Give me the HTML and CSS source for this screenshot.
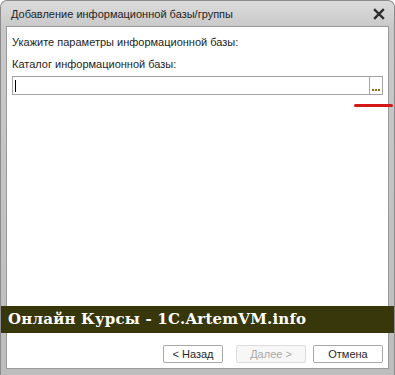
FILE: index.html
```html
<!DOCTYPE html>
<html lang="ru">
<head>
    <meta charset="UTF-8">
    <title>Добавление информационной базы/группы</title>
    <link rel="stylesheet" href="styles.css">
</head>
<body>

<div class="window">
    <div class="titlebar">
        <span class="title">Добавление информационной базы/группы</span>
        <svg class="close" width="12" height="12" viewBox="0 0 12 12">
            <path d="M2 2 L10 10 M10 2 L2 10" stroke="#2b2b2b" stroke-width="2.4" stroke-linecap="square"/>
        </svg>
    </div>

    <div class="panel">
        <div class="form">
            <p class="hint">Укажите параметры информационной базы:</p>
            <label class="label" for="catalog">Каталог информационной базы:</label>
            <div class="field">
                <div class="input" id="catalog"><span class="caret"></span></div>
                <div class="choose"><span></span><span></span><span></span></div>
            </div>
        </div>

        <div class="buttons">
            <button class="btn back">&lt; Назад</button>
            <button class="btn disabled">Далее &gt;</button>
            <button class="btn cancel">Отмена</button>
        </div>
    </div>

    <div class="mark"></div>
    <div class="banner">Онлайн Курсы - 1С.ArtemVM.info</div>
</div>

</body>
</html>
```

FILE: styles.css
```css
body {
    margin: 0;
    padding: 0;
    background-color: #ffffff;
    font-family: "Liberation Sans", Arial, sans-serif;
}
.window {
    position: relative;
    width: 395px;
    height: 375px;
    box-sizing: border-box;
    display: flex;
    flex-direction: column;
    border-radius: 7px 7px 0 0;
    border: 1px solid #8c8c8c;
    border-bottom: none;
    background: linear-gradient(to bottom, #dcdcdc 0, #c9c9c9 26px, #bdbdbd 100%);
    overflow: hidden;
}
.titlebar {
    height: 25px;
    display: flex;
    align-items: center;
    justify-content: space-between;
    padding: 0 9px 0 10px;
}
.title {
    font-size: 11px;
    color: #1e1e1e;
    padding-top: 1px;
}
.close {
    display: block;
}
.panel {
    flex: 1;
    margin: 0 5px 6px 5px;
    background-color: #ffffff;
    border: 1px solid #9a9a9a;
    display: flex;
    flex-direction: column;
    justify-content: space-between;
}
.form {
    padding: 8px 5px 0 5px;
}
.hint {
    margin: 0;
    font-size: 11px;
    color: #1e1e1e;
    line-height: 14px;
}
.label {
    display: block;
    margin-top: 8px;
    font-size: 11px;
    color: #1e1e1e;
    line-height: 14px;
}
.field {
    display: flex;
    margin-top: 5px;
    height: 17px;
    border: 1px solid #a3a3a3;
}
.input {
    flex: 1;
    display: flex;
    align-items: center;
    padding-left: 2px;
}
.caret {
    width: 1px;
    height: 12px;
    background-color: #000;
}
.choose {
    width: 13px;
    border-left: 1px solid #a3a3a3;
    display: flex;
    align-items: flex-end;
    justify-content: center;
    gap: 1px;
    padding-bottom: 3px;
    box-sizing: border-box;
}
.choose span {
    width: 2px;
    height: 2px;
    background-color: #8a6a10;
}
.buttons {
    display: flex;
    justify-content: flex-end;
    gap: 7px;
    padding: 0 5px 5px 0;
}
.btn {
    height: 18px;
    width: 70px;
    padding: 0;
    background-color: #ffffff;
    border: 1px solid #a9a9a9;
    border-radius: 2px;
    font-family: "Liberation Sans", Arial, sans-serif;
    font-size: 11px;
    color: #2a2a2a;
}
.btn.back {
    width: 60px;
}
.btn.disabled {
    color: #a8a8a8;
    border-color: #dcdcdc;
    background-color: #f7f7f7;
    margin-left: 6px;
}
/* пометки поверх окна */
.mark {
    position: absolute;
    left: 353px;
    top: 103px;
    width: 39px;
    height: 3px;
    border-radius: 2px;
    background-color: #d41818;
}
.banner {
    position: absolute;
    left: -1px;
    right: -1px;
    top: 305px;
    height: 27px;
    padding-left: 8px;
    background-color: #37370b;
    color: #ffffff;
    font-family: "DejaVu Serif", "Liberation Serif", serif;
    font-weight: bold;
    font-size: 15px;
    letter-spacing: 0.2px;
    line-height: 27px;
}
```
